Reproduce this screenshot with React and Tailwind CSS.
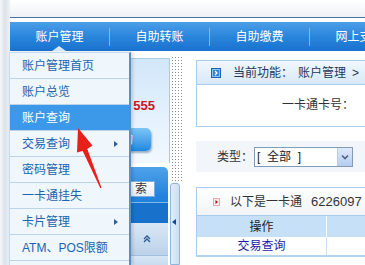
import React from 'react';

const navItems = ['账户管理', '自助转账', '自助缴费', '网上支付'];

const menuItems = [
  { label: '账户管理首页' },
  { label: '账户总览' },
  { label: '账户查询', active: true },
  { label: '交易查询', sub: true },
  { label: '密码管理' },
  { label: '一卡通挂失' },
  { label: '卡片管理', sub: true },
  { label: 'ATM、POS限额' },
  { label: '' },
];

const Sidebar = () => (
  <div className="flex w-[172px] shrink-0">
    {/* paneles que quedan detrás del menú */}
    <div className="flex flex-col w-[160px] pt-[7px]">
      <div className="h-[105px] border-t border-r border-[#a9cbe8] bg-gradient-to-b from-[#d2e7fa] to-[#f2f9ff] flex flex-col items-end">
        <div className="mt-[40px] mr-[14px] text-[13px] leading-[14px] font-bold text-[#cc1424]">555</div>
        <div className="mt-[15px] mr-[18px] w-[60px] h-[23px] rounded-[5px] bg-gradient-to-b from-[#7cc6f6] to-[#1a88e0] shadow-[1px_2px_2px_rgba(0,40,90,0.35)] text-white text-[12px] flex items-center justify-center">
          查询
        </div>
      </div>
      <div className="mt-[4px] w-[158px] h-[56px] rounded-tr-[5px] bg-gradient-to-b from-[#4fa2ea] via-[#2384dd] to-[#1b7ad6] flex flex-col">
        <div className="mt-[14px] self-end mr-[13px] h-[16px] pl-[4px] pr-[7px] bg-gradient-to-b from-white to-[#e4eef8] border border-[#7aaedc] text-[12px] leading-[13px] text-[#333] flex items-center">
          <span>检</span>
          <span className="ml-[6px]">索</span>
        </div>
        <div className="mt-[5px] h-px bg-[#7dbaf0]" />
        <div className="flex-1 bg-[#1872cc]" />
      </div>
      <div className="w-[158px] h-[33px] border-b border-[#9fbfdf] bg-gradient-to-b from-[#d9e7f5] to-[#bcd2ea] flex items-center justify-end pr-[17px]">
        <svg width="8" height="8" viewBox="0 0 8 8">
          <polyline points="1,4 4,1 7,4" fill="none" stroke="#2a5a90" strokeWidth="1.3" />
          <polyline points="1,7 4,4 7,7" fill="none" stroke="#2a5a90" strokeWidth="1.3" />
        </svg>
      </div>
      <div className="w-[158px] flex-1 bg-gradient-to-b from-[#d9e7f5] to-[#c8dbef]" />
    </div>
    <div className="flex flex-col w-[12px]">
      <div className="mt-[6px] ml-[2px] w-[10px] h-[126px] bg-[image:conic-gradient(at_1px_1px,transparent_75%,#8a8a8a_0)] bg-[length:3px_3px]" />
      <div className="w-[10px] flex-1 rounded-t-[3px] border border-[#8eb6dc] bg-gradient-to-r from-[#e2eefa] to-[#c9dff4] flex flex-col">
        <div className="mt-[35px] ml-[1px] w-0 h-0 border-y-[3px] border-y-transparent border-r-[4px] border-r-[#15469a]" />
      </div>
    </div>
  </div>
);

const Content = () => (
  <div className="flex flex-col shrink-0 w-[210px] pl-[14px] pt-[9px] text-[12px] text-[#333] whitespace-nowrap">
    <div className="w-[196px] border border-[#a9cdea]">
      <div className="h-[24px] border-b border-[#a9cdea] bg-gradient-to-b from-[#f1f7fd] to-[#d8e9f8] flex items-center pl-[14px] text-[#22385a]">
        <svg width="10" height="10" viewBox="0 0 10 10">
          <rect x="0.5" y="0.5" width="9" height="9" fill="#2f84d8" stroke="#1d63b0" />
          <rect x="1.5" y="1.5" width="7" height="7" fill="none" stroke="#8cc4f2" />
          <polyline points="4,3 6,5 4,7" fill="none" stroke="#fff" strokeWidth="1.3" />
        </svg>
        <span className="ml-[12px]">当前功能：</span>
        <span className="ml-[5px]">账户管理</span>
        <span className="ml-[6px]">&gt;</span>
      </div>
      <div className="h-[41px] pl-[85px] pt-[13px] leading-[14px] bg-white">一卡通卡号：</div>
    </div>

    <div className="mt-[14px] w-[196px] h-[31px] bg-[#f2f6fa] flex items-center pl-[21px]">
      <span>类型：</span>
      <div className="ml-px w-[99px] h-[20px] border border-[#7f9db9] bg-white flex items-center">
        <span className="pl-[2px] whitespace-pre text-[#222]">[  全部  ]</span>
        <div className="ml-auto w-[15px] h-full border-l border-[#b9cbe6] bg-gradient-to-b from-[#dde9fb] to-[#b6cdf1] flex items-center justify-center">
          <svg width="8" height="6" viewBox="0 0 8 6">
            <polyline points="1,1.5 4,4.5 7,1.5" fill="none" stroke="#4d6185" strokeWidth="1.6" />
          </svg>
        </div>
      </div>
    </div>

    <div className="mt-[15px] w-[196px] border-t border-l border-[#a9cdea]">
      <div className="h-[28px] border-b border-[#a9cdea] bg-gradient-to-b from-white to-[#f1f4f7] flex items-center pl-[16px] overflow-hidden">
        <svg width="7" height="8" viewBox="0 0 7 8" className="shrink-0">
          <rect x="0.5" y="0.5" width="6" height="7" fill="#fcecef" stroke="#eaa6b0" />
          <polygon points="2.5,2 5,4 2.5,6" fill="#a0101e" />
        </svg>
        <span className="ml-[10px]">以下是一卡通</span>
        <span className="ml-[9px] text-[13px]">6226097</span>
      </div>
      <div className="flex h-[21px] bg-[#c6e0f7]">
        <div className="w-[129px] flex items-center justify-center text-[#222]">操作</div>
        <div className="w-px bg-white" />
        <div className="flex-1" />
      </div>
      <div className="flex h-[20px] bg-white border-b-2 border-[#b5d5ef]">
        <div className="w-[129px] flex items-center justify-center text-[#1c1ca6]">交易查询</div>
        <div className="w-px bg-[#c6ddf2]" />
        <div className="flex-1" />
      </div>
    </div>
  </div>
);

const App = () => {
  return (
    <div className="relative w-[365px] h-[265px] overflow-hidden bg-white flex font-['Liberation_Sans','Noto_Sans_CJK_SC',sans-serif]">
      <div className="w-[10px] shrink-0 bg-gradient-to-r from-[#f5f7f9] via-[#dce3ea] to-[#eef2f6]" />
      <div className="flex flex-col w-[355px] shrink-0">
        <div className="h-[17px] bg-gradient-to-b from-white to-[#eef2f6]" />
        <div className="h-px bg-[#45729f]" />
        <div className="h-[4px] bg-white" />
        <nav className="h-[29px] flex bg-gradient-to-b from-[#4c9ee8] via-[#2a86dc] to-[#1872cf] text-white text-[12px] whitespace-nowrap">
          {navItems.map((item, i) => (
            <div key={item} className="flex shrink-0">
              <div className="relative w-[99px] flex items-center justify-center">
                {item}
                {i === 0 && (
                  <div className="absolute bottom-0 left-[42px] w-0 h-0 border-x-[7px] border-x-transparent border-b-[5px] border-b-[#d9ebfa]" />
                )}
              </div>
              <div className="w-px h-[18px] self-center bg-[#7db9ee]" />
            </div>
          ))}
        </nav>
        <div className="flex flex-1 min-h-0">
          <Sidebar />
          <Content />
        </div>
      </div>

      {/* menú desplegable de 账户管理 */}
      <div className="absolute left-[9px] top-[52px] bottom-0 w-[122px] bg-[#eff6fc] border-t border-l border-[#c3daef] border-r-2 border-r-[#5a8fc5] shadow-[2px_0_3px_rgba(0,0,0,0.15)] text-[12px]">
        {menuItems.map((m, i) => (
          <div
            key={i}
            className={`h-[26px] border-b border-[#bcd4ea] flex items-center justify-between pl-[12px] pr-[11px] ${
              m.active ? 'bg-[#3c98e8] text-white' : 'text-[#2064ae]'
            }`}
          >
            <span>{m.label}</span>
            {m.sub && (
              <span className="w-0 h-0 border-y-[3px] border-y-transparent border-l-[4px] border-l-[#2d5f9e]" />
            )}
          </div>
        ))}
      </div>

      {/* flecha roja */}
      <svg className="absolute inset-0 pointer-events-none" width="365" height="265" viewBox="0 0 365 265">
        <polygon
          points="78,128 92.5,145.5 87.3,149 101.5,187.8 100.4,188.2 82.7,151 77,152.5"
          fill="#e8201c"
        />
      </svg>
    </div>
  );
};

export default App;
